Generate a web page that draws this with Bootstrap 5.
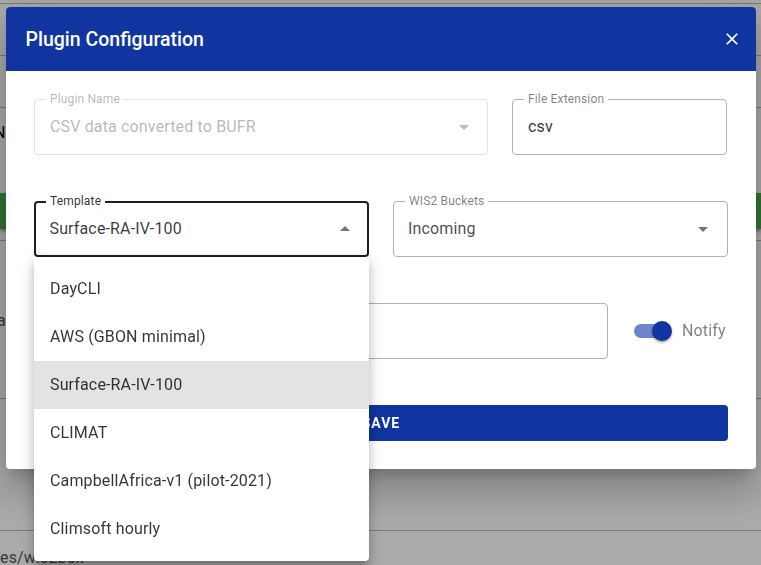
<!DOCTYPE html>
<html lang="en">
<head>
<meta charset="utf-8">
<title>Plugin Configuration</title>
<link href="https://cdn.jsdelivr.net/npm/bootstrap@5.3.0/dist/css/bootstrap.min.css" rel="stylesheet">
<style>
html, body { height: 100%; overflow: hidden; }
body { font-family: Roboto, "Liberation Sans", sans-serif; font-size: 16px; letter-spacing: .15px; background: #fff; color: rgba(0,0,0,.87); }
.pg-row { border-bottom: 1px solid #b9b9b9; }
.pg-h1 { height: 4px; }
.pg-h2 { height: 52px; }
.pg-h3 { height: 52px; }
.pg-h4 { height: 85px; padding-top: 15px; line-height: 20px; color: #000; white-space: nowrap; margin-left: -6px; }
.pg-green { height: 36px; background: #4caf50; box-shadow: 0 2px 4px rgba(0,0,0,.4); }
.pg-h5 { height: 12px; }
.pg-h6 { height: 158px; padding-top: 70px; line-height: 20px; color: #555; margin-left: -3px; }
.pg-h7 { height: 132px; }
.pg-h8 { padding-top: 17px; line-height: 20px; color: #555; white-space: nowrap; }
.scrim { background: rgba(0,0,0,.335); }
.dlg { top: 7px; left: 6px; width: 750px; height: 462px; }
.dlg-card { height: 100%; background: #fff; border: 0; border-radius: 4px; box-shadow: 0 11px 15px -7px rgba(0,0,0,.2), 0 24px 38px 3px rgba(0,0,0,.14), 0 9px 46px 8px rgba(0,0,0,.12); }
.dlg-head { height: 64px; padding: 1px 12px 0 19.5px; background: #1035a0; color: #fff; border: 0; border-radius: 4px 4px 0 0; }
.dlg-title { font-size: 19.5px; font-weight: 500; line-height: 32px; letter-spacing: 0; margin: 0; }
.dlg-close { width: 24px; height: 24px; padding: 2px; border: 0; background: none; color: #fff; line-height: 0; margin-top: -1px; }
.dlg-body { padding: 28px; }
.field-row { height: 56px; margin-bottom: 46px; }
.field { height: 56px; border: 1px solid #b0b0b0; border-radius: 4px; padding: 0 15px; color: rgba(0,0,0,.82); background: #fff; }
.field-lbl { top: -8px; left: 11px; padding: 0 4px; background: #fff; font-size: 12px; line-height: 15px; color: rgba(0,0,0,.5); white-space: nowrap; }
.field-off { border-color: #e2e2e2; color: rgba(0,0,0,.3); }
.field-off .field-lbl { color: rgba(0,0,0,.3); }
.field-off .caret-ic { opacity: .5; }
.field-on { border: 2px solid #1f1f1f; padding: 0 14px 0 13.5px; color: rgba(0,0,0,.78); }
.field-on .field-lbl { top: -9px; left: 10px; color: rgba(0,0,0,.82); }
.caret-ic { position: absolute; top: 50%; right: 12px; margin-top: -12px; width: 24px; height: 24px; fill: #757575; }
.field-off .caret-ic { right: 11px; }
.field-on .caret-ic { right: 10px; }
.w-a { width: 454px; }
.w-b { width: 215px; }
.w-c { width: 335px; }
.w-d { width: 574px; }
.w-e { width: 335px; margin-left: 24px; padding-left: 14px; color: rgba(0,0,0,.72); }
.menu-box { display: block; top: calc(100% + 2px); left: -2px; margin-top: 0; width: 335px; min-width: 0; padding: 8px 0; border: 0; border-radius: 4px; background: #fff; box-shadow: 0 5px 5px -3px rgba(0,0,0,.2), 0 8px 10px 1px rgba(0,0,0,.14), 0 3px 14px 2px rgba(0,0,0,.12); z-index: 5; }
.menu-box .dropdown-item { height: 48px; padding: 0 16px; line-height: 47px; color: rgba(0,0,0,.8); font-size: 16px; letter-spacing: .15px; }
.menu-box .dropdown-item.active { background: #e3e3e3; color: rgba(0,0,0,.8); }
.toggle-wrap { margin-left: 26px; color: rgba(0,0,0,.5); height: 56px; }
.tog-track { width: 36px; height: 14px; border-radius: 7px; background: #7085c7; }
.tog-thumb { top: -3px; right: -2px; width: 20px; height: 20px; border-radius: 50%; background: #1035a0; box-shadow: 0 2px 1px -1px rgba(0,0,0,.2), 0 2px 3px rgba(0,0,0,.2), 0 1px 3px rgba(0,0,0,.12); }
.tog-lbl { margin-left: 12px; }
.save-btn { height: 36px; background: #1035a0; border: 0; border-radius: 4px; color: #fff; font-size: 14px; font-weight: 700; letter-spacing: 1px; padding: 0; }
.save-btn:hover { background: #1035a0; color: #fff; }
</style>
</head>
<body>
<div aria-hidden="true">
  <div class="pg-row pg-h1"></div>
  <div class="pg-row pg-h2"></div>
  <div class="pg-row pg-h3"></div>
  <div class="pg-h4">N</div>
  <div class="pg-green"></div>
  <div class="pg-row pg-h5"></div>
  <div class="pg-row pg-h6">a</div>
  <div class="pg-row pg-h7"></div>
  <div class="pg-h8">es/wis2box</div>
</div>
<div class="scrim position-fixed top-0 start-0 w-100 h-100"></div>
<div class="dlg position-fixed">
  <div class="modal-content dlg-card">
    <div class="modal-header dlg-head d-flex justify-content-between align-items-center">
      <h2 class="dlg-title">Plugin Configuration</h2>
      <button type="button" class="dlg-close" aria-label="Close">
        <svg viewBox="0 0 24 24" width="20" height="20" fill="currentColor"><path d="M19 6.41 17.59 5 12 10.59 6.41 5 5 6.41 10.59 12 5 17.59 6.41 19 12 13.41 17.59 19 19 17.59 13.41 12z"/></svg>
      </button>
    </div>
    <div class="modal-body dlg-body">
      <div class="d-flex gap-4 field-row">
        <div class="field field-off w-a position-relative d-flex align-items-center">
          <span class="field-lbl position-absolute">Plugin Name</span>
          <span>CSV data converted to BUFR</span>
          <svg class="caret-ic" viewBox="0 0 24 24"><path d="m7 10 5 5 5-5z"/></svg>
        </div>
        <div class="field w-b position-relative d-flex align-items-center">
          <span class="field-lbl position-absolute">File Extension</span>
          <span>csv</span>
        </div>
      </div>
      <div class="d-flex field-row">
        <div class="field field-on w-c position-relative d-flex align-items-center">
          <span class="field-lbl position-absolute">Template</span>
          <span>Surface-RA-IV-100</span>
          <svg class="caret-ic" viewBox="0 0 24 24"><path d="m7 14 5-5 5 5z"/></svg>
          <ul class="dropdown-menu menu-box position-absolute list-unstyled m-0">
            <li><a class="dropdown-item" href="#">DayCLI</a></li>
            <li><a class="dropdown-item" href="#">AWS (GBON minimal)</a></li>
            <li><a class="dropdown-item active" href="#">Surface-RA-IV-100</a></li>
            <li><a class="dropdown-item" href="#">CLIMAT</a></li>
            <li><a class="dropdown-item" href="#">CampbellAfrica-v1 (pilot-2021)</a></li>
            <li><a class="dropdown-item" href="#">Climsoft hourly</a></li>
          </ul>
        </div>
        <div class="field w-e position-relative d-flex align-items-center">
          <span class="field-lbl position-absolute">WIS2 Buckets</span>
          <span>Incoming</span>
          <svg class="caret-ic" viewBox="0 0 24 24"><path d="m7 10 5 5 5-5z"/></svg>
        </div>
      </div>
      <div class="d-flex field-row">
        <div class="field w-d"></div>
        <div class="toggle-wrap d-flex align-items-center">
          <span class="tog-track position-relative d-block"><span class="tog-thumb position-absolute d-block"></span></span>
          <span class="tog-lbl">Notify</span>
        </div>
      </div>
      <button type="button" class="btn save-btn w-100 text-uppercase">Save</button>
    </div>
  </div>
</div>
<script src="https://cdn.jsdelivr.net/npm/bootstrap@5.3.0/dist/js/bootstrap.bundle.min.js"></script>
</body>
</html>
